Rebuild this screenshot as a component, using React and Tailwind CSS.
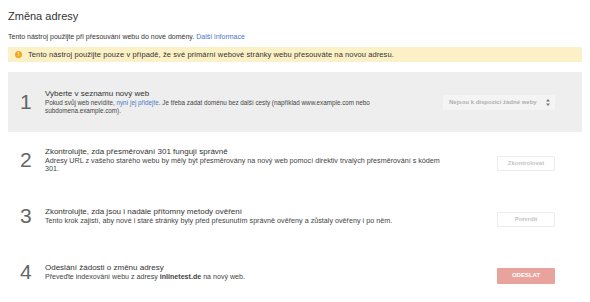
import React from 'react';

const font = "font-['Liberation_Sans',Arial,sans-serif]";

const Step = ({ num, title, children, right, boxed, descClass }) => (
    <div
        className={`flex items-center pl-[12px] pr-[27px] ${boxed ? 'h-[60px] bg-[#eeeeee]' : 'h-[56px]'}`}
    >
        <div className="w-[25px] shrink-0 text-[21px] leading-[24px] text-[#666] font-light">{num}</div>
        <div className="flex-1 min-w-0 max-w-[400px]">
            <div className="text-[8px] leading-[10px] text-[#333]">{title}</div>
            <div className={`leading-[8px] text-[#444] ${descClass}`}>{children}</div>
        </div>
        <div className="ml-auto shrink-0 pl-[18px]">{right}</div>
    </div>
);

const GhostButton = ({ label }) => (
    <button className="w-[58px] h-[15px] bg-white border border-[#ececec] rounded-[1px] text-[6px] font-bold text-[#c4c4c4]">
        {label}
    </button>
);

export default function App() {
    return (
        <div className={`w-[590px] h-[302px] bg-white overflow-hidden ${font}`}>
            <div className="px-2 pt-[9px]">
                <h1 className="text-[11px] leading-[14px] text-[#333]">Změna adresy</h1>
                <p className="mt-[9px] text-[7px] leading-[9px] text-[#333]">
                    Tento nástroj použijte při přesouvání webu do nové domény.{' '}
                    <a className="text-[#4a76c8]">Další informace</a>
                </p>

                {/* warning banner */}
                <div className="mt-[6px] h-[15px] bg-[#fcf1c6] flex items-center pl-[7px]">
                    <span className="w-[7px] h-[7px] rounded-full bg-[#f2a81d] text-white text-[5px] font-bold leading-[7px] text-center">
                        !
                    </span>
                    <span className="ml-[6px] text-[7.5px] tracking-[0.1px] text-[#333]">
                        Tento nástroj použijte pouze v případě, že své primární webové stránky webu přesouváte na novou adresu.
                    </span>
                </div>

                <div className="mt-[10px]">
                    <Step
                        num="1"
                        boxed
                        descClass="text-[6.3px]"
                        title="Vyberte v seznamu nový web"
                        right={
                            <div className="w-[112px] h-[15px] bg-[#f4f4f4] rounded-[1px] flex items-center justify-between pl-[6px] pr-[5px]">
                                <span className="text-[6px] font-bold text-[#b0b0b0]">Nejsou k dispozici žádné weby</span>
                                <svg width="4" height="7" viewBox="0 0 4 7" fill="#777">
                                    <path d="M2 0 L4 2.5 L0 2.5 Z" />
                                    <path d="M0 4.5 L4 4.5 L2 7 Z" />
                                </svg>
                            </div>
                        }
                    >
                        Pokud svůj web nevidíte, <a className="text-[#4a76c8]">nyní jej přidejte</a>. Je třeba zadat doménu bez další cesty (například www.example.com nebo subdomena.example.com).
                    </Step>
                    <Step
                        num="2"
                        descClass="text-[7.2px]"
                        title="Zkontrolujte, zda přesměrování 301 fungují správně"
                        right={<GhostButton label="Zkontrolovat" />}
                    >
                        Adresy URL z vašeho starého webu by měly být přesměrovány na nový web pomocí direktiv trvalých přesměrování s kódem 301.
                    </Step>
                    <Step
                        num="3"
                        descClass="text-[7.2px]"
                        title="Zkontrolujte, zda jsou i nadále přítomny metody ověření"
                        right={<GhostButton label="Potvrdit" />}
                    >
                        Tento krok zajistí, aby nové i staré stránky byly před přesunutím správně ověřeny a zůstaly ověřeny i po něm.
                    </Step>
                    <Step
                        num="4"
                        descClass="text-[7.1px]"
                        title="Odeslání žádosti o změnu adresy"
                        right={
                            <button className="w-[58px] h-[16px] bg-[#e8a39d] rounded-[1px] text-[6px] font-bold text-white">
                                ODESLAT
                            </button>
                        }
                    >
                        Převeďte indexování webu z adresy <b>inlinetest.de</b> na nový web.
                    </Step>
                </div>
            </div>
        </div>
    );
}
